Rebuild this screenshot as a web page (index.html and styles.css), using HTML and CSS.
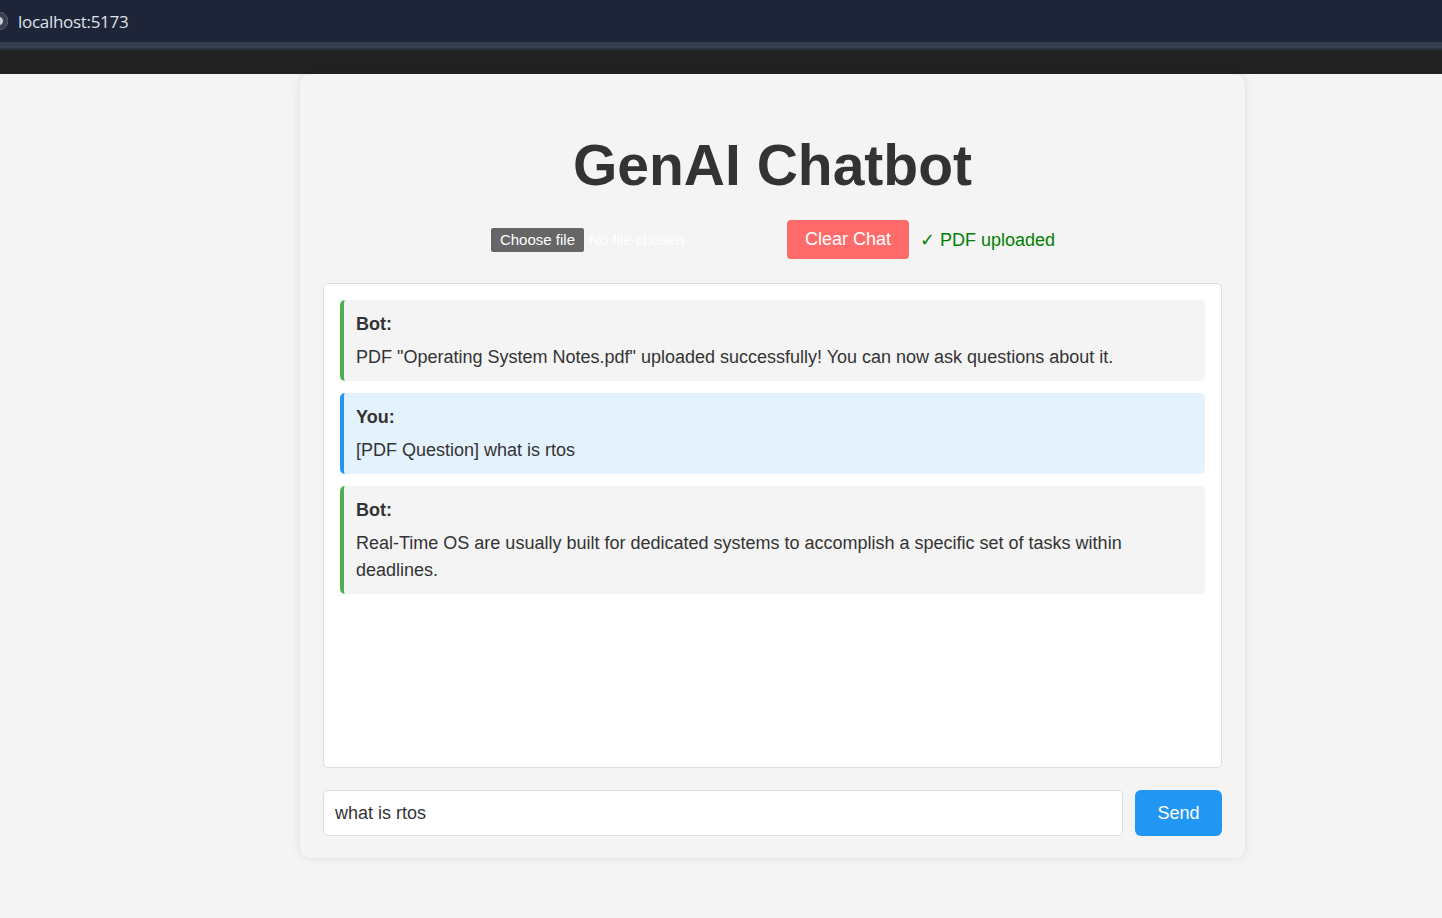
FILE: index.html
```html
<!DOCTYPE html>
<html lang="en">
<head>
<meta charset="utf-8">
<title>GenAI Chatbot</title>
<link rel="stylesheet" href="styles.css">
</head>
<body>
<div class="browser-bar">
  <span class="site-icon"></span>
  <span class="url">localhost:5173</span>
</div>
<div class="browser-line"></div>
<div class="browser-strip"></div>
<main class="page">
  <div class="card">
    <h1 class="title">GenAI Chatbot</h1>
    <div class="controls">
      <div class="file-input">
        <span class="file-btn">Choose file</span>
        <span class="file-name">No file chosen</span>
      </div>
      <button class="clear-btn">Clear Chat</button>
      <span class="status">✓ PDF uploaded</span>
    </div>
    <div class="chat-box">
      <div class="msg bot">
        <strong>Bot:</strong>
        <p>PDF "Operating System Notes.pdf" uploaded successfully! You can now ask questions about it.</p>
      </div>
      <div class="msg user">
        <strong>You:</strong>
        <p>[PDF Question] what is rtos</p>
      </div>
      <div class="msg bot">
        <strong>Bot:</strong>
        <p>Real-Time OS are usually built for dedicated systems to accomplish a specific set of tasks within deadlines.</p>
      </div>
    </div>
    <div class="input-row">
      <input class="text-input" type="text" value="what is rtos">
      <button class="send-btn">Send</button>
    </div>
  </div>
</main>
</body>
</html>
```

FILE: styles.css
```css
html, body {
  margin: 0;
  padding: 0;
  background: #f4f4f4;
  font-family: "Liberation Sans", Arial, sans-serif;
  color: #333;
}

.browser-bar {
  height: 42px;
  background: #1e2538;
  display: flex;
  align-items: center;
  position: relative;
  overflow: hidden;
}

.site-icon {
  position: absolute;
  left: -10px;
  top: 12px;
  width: 18px;
  height: 18px;
  border-radius: 50%;
  background: #3a4152;
  box-shadow: inset 0 0 0 5px #3a4152, inset 0 0 0 9px #c8ccd4;
}

.url {
  margin-left: 18px;
  color: #dfe2e8;
  font-family: "Open Sans", "Noto Sans", sans-serif;
  font-size: 17px;
  letter-spacing: -0.3px;
}

.browser-line {
  height: 6px;
  background: #353d4f;
  border-bottom: 2px solid #2b313e;
}

.browser-strip {
  height: 24px;
  background: #222222;
}

.page {
  padding-left: 300px;
  padding-bottom: 60px;
}

.card {
  width: 945px;
  box-sizing: border-box;
  padding: 23px 23px 22px;
  background: #f4f4f4;
  border-radius: 10px;
  box-shadow: 0 0 10px rgba(0, 0, 0, 0.1);
}

.title {
  margin: 35px 0 22px;
  text-align: center;
  font-size: 57px;
  font-weight: bold;
  line-height: 66px;
  color: #333;
}

.controls {
  display: flex;
  justify-content: center;
  align-items: center;
  gap: 11px;
  margin-left: 1px;
  margin-bottom: 24px;
}

.file-input {
  width: 285px;
  display: flex;
  align-items: center;
  font-size: 15px;
}

.file-btn {
  background: #666;
  color: #fff;
  padding: 3px 9px;
  border-radius: 2px;
  line-height: 18px;
}

.file-name {
  color: #fff;
  margin-left: 5px;
}

.clear-btn {
  background: #ff6b6b;
  color: #fff;
  border: none;
  border-radius: 4px;
  font-family: "Liberation Sans", Arial, sans-serif;
  font-size: 18px;
  padding: 9px 18px;
  line-height: 21px;
}

.status {
  color: #008000;
  font-size: 18px;
}

.chat-box {
  height: 451px;
  padding: 16px;
  background: #fff;
  border: 1px solid #ddd;
  border-radius: 5px;
  display: flex;
  flex-direction: column;
  gap: 12px;
}

.msg {
  padding: 11px 12px 10px;
  border-radius: 5px;
  font-size: 18px;
  line-height: 27px;
}

.msg strong {
  display: block;
  margin-bottom: 6px;
}

.msg p {
  margin: 0;
}

.msg.bot {
  background: #f4f4f4;
  border-left: 4px solid #4caf50;
}

.msg.user {
  background: #e3f2fd;
  border-left: 4px solid #2196f3;
}

.input-row {
  display: flex;
  gap: 12px;
  margin-top: 22px;
}

.text-input {
  flex: 1;
  height: 46px;
  box-sizing: border-box;
  border: 1px solid #ddd;
  border-radius: 5px;
  padding: 0 11px;
  font-family: "Liberation Sans", Arial, sans-serif;
  font-size: 18px;
  color: #333;
  background: #fff;
}

.send-btn {
  width: 87px;
  height: 46px;
  background: #2196f3;
  color: #fff;
  border: none;
  border-radius: 6px;
  font-family: "Liberation Sans", Arial, sans-serif;
  font-size: 18px;
}
```
